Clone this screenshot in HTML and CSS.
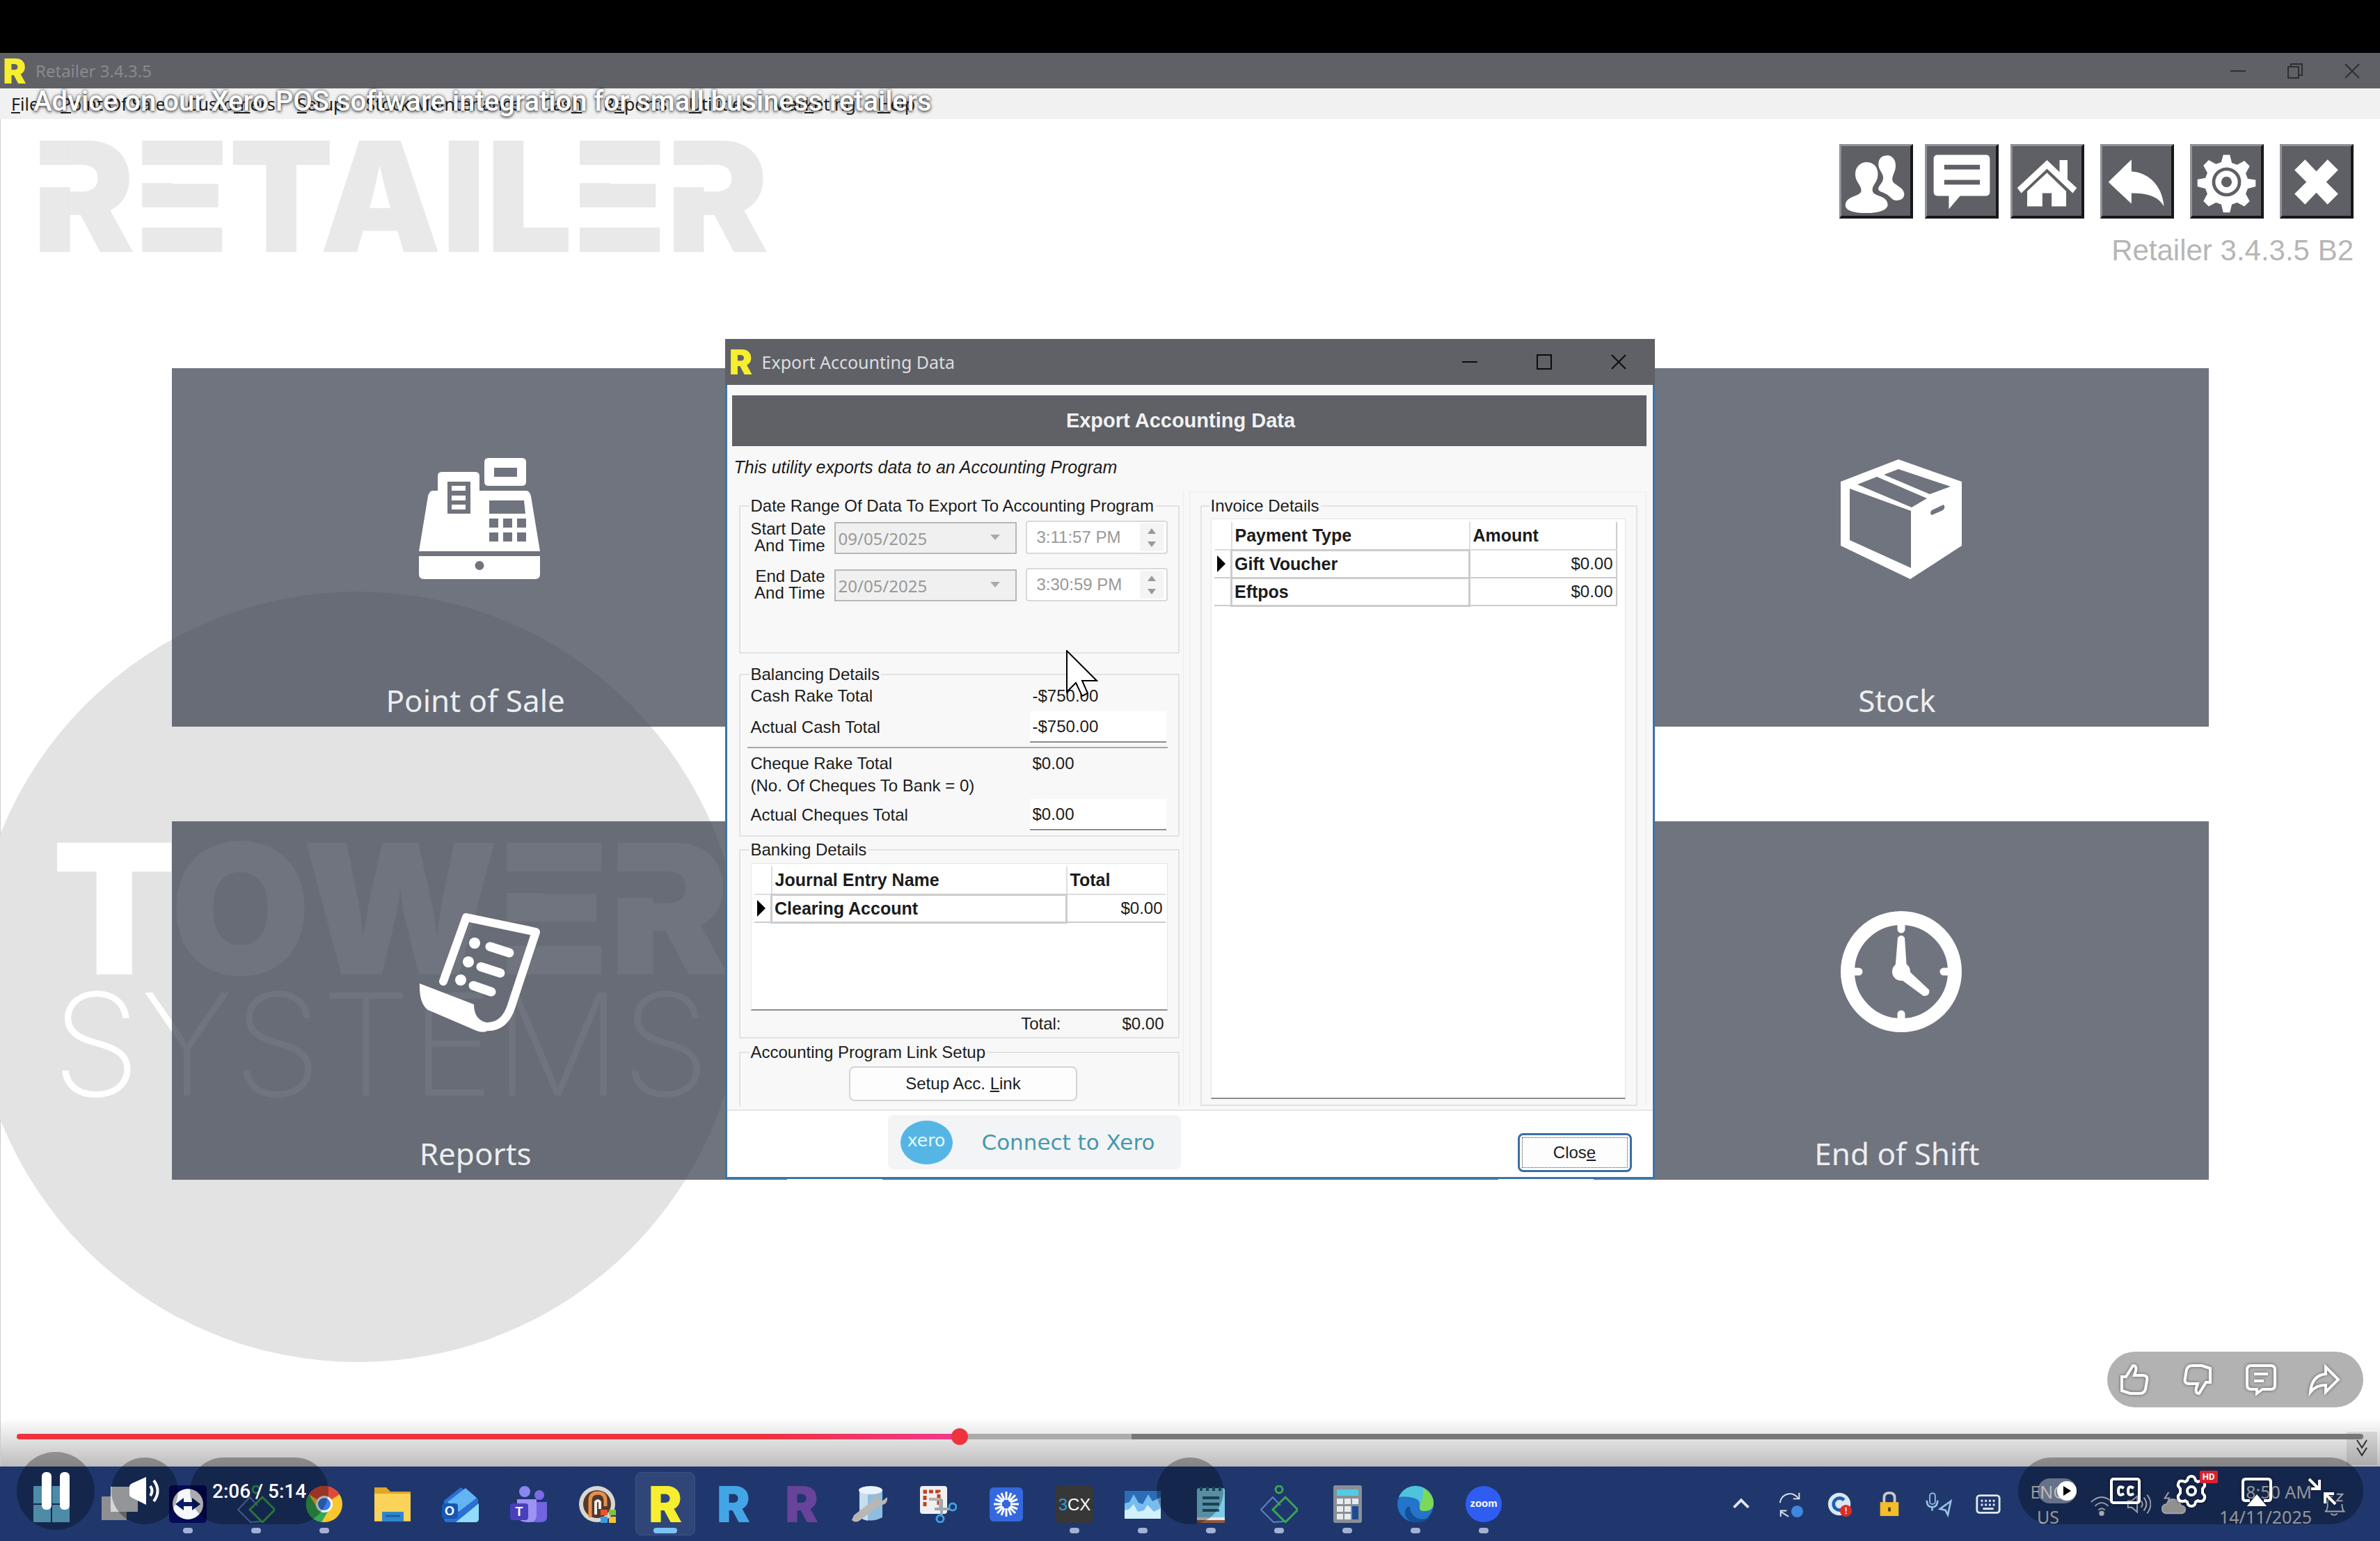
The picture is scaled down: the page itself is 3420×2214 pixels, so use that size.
FILE: index.html
```html
<!DOCTYPE html>
<html lang="en">
    <head>
        <meta charset="UTF-8">
        <meta name="viewport" content="width=device-width, initial-scale=1.0">
        <title>Retailer 3.4.3.5</title>
        <link rel="stylesheet" href="styles.css">
    </head>
    <body>
        <!-- Main window -->
        <div class="titlebar">
            <span class="r-logo">R</span>
            <span class="titlebar-text">Retailer 3.4.3.5</span>
            <div class="window-controls">
                <svg viewBox="0 0 24 24"><path d="M1 12h22"/></svg>
                <svg viewBox="0 0 24 24"><path d="M2 6h15v16H2zM6 6V2h16v16h-5"/></svg>
                <svg viewBox="0 0 24 24"><path d="M2 2l20 20M22 2L2 22"/></svg>
            </div>
        </div>
        <nav class="menu">
            <span><u>F</u>ile</span>
            <span><u>P</u>oint Of Sale</span>
            <span>Custo<u>m</u>ers</span>
            <span><u>S</u>etup</span>
            <span>Stock Maintenance</span>
            <span>Cas<u>h</u></span>
            <span>R<u>e</u>ports</span>
            <span><u>U</u>tilities</span>
            <span>Mar<u>k</u>eting</span>
            <span><u>H</u>elp</span>
        </nav>

        <main class="app">
            <div class="watermark">
                <div class="tower">TOW<span class="cut-e">E</span><span class="cut-r">R</span></div>
                <div class="systems">SYSTEMS</div>
            </div>

            <header class="header">
                <div class="brand"><span class="cut-r">R</span><span class="cut-e">E</span>TAIL<span class="cut-e">E</span><span class="cut-r">R</span></div>
                <div class="header-right">
                    <div class="toolbar">
                        <div class="toolbar-group">
                            <button class="tool" aria-label="Customers">
                                <svg viewBox="0 0 100 100"><path d="M66 11c8-1 14 6 14 15 0 10-5 14-5 21 0 9 17 10 18 22 0 6-4 10-12 10-7 0-9-7-16-10-6-4-12-3-11-9 1-5 8-8 7-17-1-7-7-10-7-19 0-8 5-13 12-13z"/><path d="M36 21c11 0 18 8 17 20-1 12-9 15-8 23 1 10 22 6 23 21 0 8-12 13-32 13S4 94 4 86c1-15 23-12 24-22 0-8-8-12-9-23-1-12 7-20 17-20z"/></svg>
                            </button>
                            <button class="tool" aria-label="Messages">
                                <svg viewBox="0 0 100 100"><path fill-rule="evenodd" d="M14 10h73q6 0 6 6v50q0 6-6 6H48L31 92V72H14q-6 0-6-6V16q0-6 6-6zM24 25v7h54v-7zM24 48v7h54v-7z"/></svg>
                            </button>
                            <button class="tool" aria-label="Home">
                                <svg viewBox="0 0 100 100"><path d="M50 18l19 18V18h12v29l14 13-6 8-39-37-39 37-6-8zM50 37l29 28v23H57V68H43v20H20V65z"/></svg>
                            </button>
                        </div>
                        <div class="toolbar-group">
                            <button class="tool" aria-label="Back">
                                <svg viewBox="0 0 100 100"><path d="M7 51L42 17v18c28 2 47 24 49 53C82 72 64 68 42 68v16z"/></svg>
                            </button>
                            <button class="tool" aria-label="Settings">
                                <svg viewBox="0 0 100 100"><path fill-rule="evenodd" d="M45 10h10l3 12 8 3 11-6 8 8-6 11 3 8 12 2v10l-12 3-3 8 6 11-8 8-11-6-8 3-3 12H45l-3-12-8-3-11 6-8-8 6-11-3-8-12-3V47l12-2 3-8-6-11 8-8 11 6 8-3zM50 29a22 22 0 100 44 22 22 0 000-44z"/><path fill-rule="evenodd" d="M50 34a17 17 0 100 34 17 17 0 000-34zM50 43a8 8 0 110 16 8 8 0 010-16z"/></svg>
                            </button>
                            <button class="tool" aria-label="Close">
                                <svg viewBox="0 0 100 100"><path d="M17 33L33 17l17 18 17-18 16 16-18 18 18 18-16 16-17-18-17 18-16-16 18-18z"/></svg>
                            </button>
                        </div>
                    </div>
                    <div class="version">Retailer 3.4.3.5 B2</div>
                </div>
            </header>

            <!-- Launch tiles -->
            <div class="tiles">
                <button class="tile">
                    <svg viewBox="0 0 174 174"><path fill-rule="evenodd" d="M100 0h48q6 0 6 6v28q0 6-6 6h-48q-6 0-6-6V6q0-6 6-6zM108 14v13h33V14z"/><path fill-rule="evenodd" d="M33 20h48q6 0 6 6v21h67q5 0 7 8l13 79H0l13-79q2-8 7-8h7V26q0-6 6-6zM41 34v46h33V34zM101 61v19h52l-2-19zM101 87v13h13V87zM121 87v13h13V87zM141 87v13h13V87zM101 107v13h13v-13zM121 107v13h13v-13zM141 107v13h13v-13z"/><path d="M47 40h20v7H47zM47 54h20v7H47zM47 67h20v7H47z"/><path fill-rule="evenodd" d="M0 141h174v26q0 7-7 7H7q-7 0-7-7zM87 148a6 6 0 100 13 6 6 0 000-13z"/></svg>
                    <span>Point of Sale</span>
                </button>
                <button class="tile"></button>
                <button class="tile">
                    <svg viewBox="0 0 174 174"><path fill-rule="evenodd" d="M83 2l91 32v92l-74 48L0 126V34zM83 16L62 24l66 28 30-11zM52 27L24 38l78 33 22-13zM13 44v74l88 40V76zM131 75l17-8q3 4-1 8l-16 7q-4-3 0-7z"/></svg>
                    <span>Stock</span>
                </button>
                <button class="tile">
                    <svg viewBox="0 0 174 174"><path d="M35 101L68 9l100 21-35 106q-10 32-38 30" fill="none" stroke="#fff" stroke-width="12" stroke-linecap="round" stroke-linejoin="round"/><path d="M1 104l78 30q0 22 18 26v13q-7 2-14-1L13 142Q0 133 1 104z"/><circle cx="80" cy="46" r="8"/><circle cx="71" cy="73" r="8"/><circle cx="60" cy="99" r="8"/><path d="M102 51l28 9M89 80l28 9M78 107l26 9" stroke="#fff" stroke-width="13" stroke-linecap="round"/></svg>
                    <span>Reports</span>
                </button>
                <button class="tile"></button>
                <button class="tile">
                    <svg viewBox="0 0 174 174"><circle cx="87" cy="87" r="77" fill="none" stroke="#fff" stroke-width="20"/><path d="M87 18v8M87 148v8M18 87h8M148 87h8" stroke="#fff" stroke-width="11" stroke-linecap="round"/><circle cx="87" cy="87" r="13"/><path d="M82 38q5-6 10 0l3 45 32 30q2 9-8 9L85 97l-7-10z"/></svg>
                    <span>End of Shift</span>
                </button>
            </div>

            <button class="scroll-down" aria-label="Scroll down">
                <svg viewBox="0 0 20 30"><path d="M3 3l7 11 7-11M3 14l7 11 7-11"/></svg>
            </button>

            <!-- Export dialog -->
            <section class="dialog">
                <div class="dialog-title">
                    <span class="r-logo">R</span>
                    <span>Export Accounting Data</span>
                    <div class="window-controls">
                        <svg viewBox="0 0 24 24"><path d="M1 12h22"/></svg>
                        <svg viewBox="0 0 24 24"><path d="M2 2h20v20H2z"/></svg>
                        <svg viewBox="0 0 24 24"><path d="M2 2l20 20M22 2L2 22"/></svg>
                    </div>
                </div>
                <div class="dialog-body">
                    <h1>Export Accounting Data</h1>
                    <p class="intro">This utility exports data to an Accounting Program</p>
                    <div class="columns">
                        <div class="column">
                            <fieldset class="dates">
                                <legend>Date Range Of Data To Export To Accounting Program</legend>
                                <div class="date-row">
                                    <label for="start-date">Start Date<br>And Time</label>
                                    <span class="select-wrap"><select id="start-date" disabled><option>09/05/2025</option></select></span>
                                    <span class="time-wrap"><input type="text" value="3:11:57 PM" aria-label="Start time" disabled><svg viewBox="0 0 34 40"><path d="M11 15l6-8 6 8zM11 26l6 8 6-8z"/></svg></span>
                                </div>
                                <div class="date-row">
                                    <label for="end-date">End Date<br>And Time</label>
                                    <span class="select-wrap"><select id="end-date" disabled><option>20/05/2025</option></select></span>
                                    <span class="time-wrap"><input type="text" value="3:30:59 PM" aria-label="End time" disabled><svg viewBox="0 0 34 40"><path d="M11 15l6-8 6 8zM11 26l6 8 6-8z"/></svg></span>
                                </div>
                            </fieldset>
                            <fieldset class="balancing">
                                <legend>Balancing Details</legend>
                                <div class="line"><span>Cash Rake Total</span><span class="value">-$750.00</span></div>
                                <div class="line entry"><label for="cash">Actual Cash Total</label><input id="cash" type="text" value="-$750.00"></div>
                                <hr>
                                <div class="line"><span>Cheque Rake Total</span><span class="value">$0.00</span></div>
                                <div class="line"><span>(No. Of Cheques To Bank = 0)</span></div>
                                <div class="line entry"><label for="cheques">Actual Cheques Total</label><input id="cheques" type="text" value="$0.00"></div>
                            </fieldset>
                            <fieldset class="banking">
                                <legend>Banking Details</legend>
                                <div class="grid">
                                    <table>
                                        <colgroup><col class="col-mark"><col><col class="col-total"></colgroup>
                                        <tr><th></th><th>Journal Entry Name</th><th>Total</th></tr>
                                        <tr><td class="mark"><i></i></td><td class="name">Clearing Account</td><td class="amount">$0.00</td></tr>
                                    </table>
                                </div>
                                <div class="sum"><span>Total:</span><span class="amount">$0.00</span></div>
                            </fieldset>
                            <fieldset class="link-setup">
                                <legend>Accounting Program Link Setup</legend>
                                <button class="btn">Setup Acc. <u>L</u>ink</button>
                            </fieldset>
                        </div>
                        <div class="column column-right">
                            <fieldset class="invoice">
                                <legend>Invoice Details</legend>
                                <div class="grid">
                                    <table>
                                        <colgroup><col class="col-mark"><col><col class="col-amount"></colgroup>
                                        <tr><th></th><th>Payment Type</th><th>Amount</th></tr>
                                        <tr><td class="mark"><i></i></td><td class="name">Gift Voucher</td><td class="amount">$0.00</td></tr>
                                        <tr><td class="mark"></td><td class="name">Eftpos</td><td class="amount">$0.00</td></tr>
                                    </table>
                                </div>
                            </fieldset>
                        </div>
                    </div>
                    <div class="dialog-footer">
                        <button class="xero"><span class="xero-logo">xero</span>Connect to Xero</button>
                        <button class="btn btn-close"><span>Clos<u>e</u></span></button>
                    </div>
                </div>
                <svg class="cursor" viewBox="0 0 46 68"><path d="M1 1v59l13-13 9 19 8-4-8-18h21z" fill="#fff" stroke="#000" stroke-width="2"/></svg>
            </section>
        </main>

        <!-- Windows taskbar -->
        <footer class="taskbar">
            <div class="task-icons">
                <div class="task"><svg viewBox="0 0 54 54"><path d="M1 1h25v25H1zM28 1h25v25H28zM1 28h25v25H1zM28 28h25v25H28z" fill="#6fc8ef"/></svg></div>
                <div class="task"><svg viewBox="0 0 54 54"><path d="M1 16h36v34H1z" fill="#8f8f92"/><path d="M14 2h39v36H14z" fill="#d4d6d8"/></svg></div>
                <div class="task on"><svg viewBox="0 0 54 54"><rect width="54" height="54" rx="5" fill="#050a56"/><circle cx="27" cy="27" r="22" fill="#f4f7fb"/><path d="M9 27l12-9v6h12v-6l12 9-12 9v-6H21v6z" fill="#0a1c66"/></svg></div>
                <div class="task on"><svg viewBox="0 0 54 54"><path d="M33 52L19 53 1 35l17-18 11 12" fill="none" stroke="#5b83bd" stroke-width="2"/><path d="M36 17l18 18-18 18-18-18z" fill="none" stroke="#3aa652" stroke-width="3"/><circle cx="27" cy="6" r="5" fill="none" stroke="#3aa652" stroke-width="3"/></svg></div>
                <div class="task on"><svg viewBox="0 0 54 54"><circle cx="27" cy="27" r="26" fill="#fbc62f"/><path d="M27 27L5 13a26 26 0 0144 0z" fill="#dd4b3a"/><path d="M5 13a26 26 0 0018 40l12-20-18 0z" fill="#35a853"/><circle cx="27" cy="27" r="12" fill="#fff"/><circle cx="27" cy="27" r="9" fill="#3b7ded"/></svg></div>
                <div class="task"><svg viewBox="0 0 54 54"><path d="M1 3h17l6 6h29v43H1z" fill="#e0a528"/><path d="M1 12h52v39H1z" fill="#fbd35b"/><path d="M12 38h31v14H12z" fill="#2f86cf"/><path d="M17 44h21" stroke="#1c5fa0" stroke-width="3"/></svg></div>
                <div class="task"><svg viewBox="0 0 54 54"><path d="M3 22L27 3l25 17v28q0 5-5 5H8q-5 0-5-5z" fill="#2b6fd3"/><path d="M8 24L34 4l16 14-26 20z" fill="#63b4f5"/><path d="M20 53l33-27v22q0 5-5 5z" fill="#8fdcfb"/><rect y="26" width="23" height="22" rx="4" fill="#1557b5"/><text x="11" y="43" class="glyph">O</text></svg></div>
                <div class="task"><svg viewBox="0 0 54 54"><circle cx="21" cy="9" r="8" fill="#8a86f0"/><circle cx="42" cy="14" r="7" fill="#7b6be6"/><path d="M30 24h23v22q0 7-9 7H30z" fill="#7263e0"/><path d="M10 20h28v24q0 9-12 9-16 0-16-12z" fill="#9c93f5"/><rect y="26" width="26" height="24" rx="4" fill="#4a3fbb"/><text x="13" y="44" class="glyph">T</text></svg></div>
                <div class="task"><svg viewBox="0 0 54 54"><circle cx="27" cy="27" r="26" fill="#d9d7d4"/><circle cx="27" cy="27" r="20" fill="#54392b"/><path d="M17 46V22q0-11 11-11t11 11v8" fill="none" stroke="#e6904b" stroke-width="5"/><path d="M25 42V24q3-4 6 0v10" fill="none" stroke="#f3ece6" stroke-width="4"/><path d="M32 35h10v8H32z" fill="#e5562c"/><path d="M44 35h10v8H44z" fill="#86bf3c"/><path d="M32 45h10v9H32z" fill="#3a9be0"/><path d="M44 45h10v9H44z" fill="#f5c32c"/></svg></div>
                <div class="task active"><span class="r-logo r-big">R</span></div>
                <div class="task"><span class="r-logo r-big r-blue">R</span></div>
                <div class="task"><span class="r-logo r-big r-purple">R</span></div>
                <div class="task"><svg viewBox="0 0 54 54"><path d="M12 6v40q16 9 33 0V6z" fill="#8fbde0"/><path d="M12 6v40q6 4 12 5V6z" fill="#c6def0"/><ellipse cx="28" cy="7" rx="17" ry="6" fill="#eaf3fa"/><path d="M4 43l28-22q1-8 8-8l-1 8 5 2 8-6q1 11-11 12L13 50q-6 5-12 0z" fill="#b9b7b4"/></svg></div>
                <div class="task"><svg viewBox="0 0 54 54"><rect x="1" y="1" width="39" height="40" rx="4" fill="#eef0f2"/><path d="M8 30V9h20v21" fill="none" stroke="#c0431f" stroke-width="5" stroke-dasharray="6 3"/><path d="M14 20h16v14" fill="none" stroke="#b5b0a8" stroke-width="4"/><path d="M32 20v22M22 34h22" stroke="#9fa7b0" stroke-width="4"/><circle cx="48" cy="31" r="5" fill="none" stroke="#3fa0e4" stroke-width="3"/><circle cx="30" cy="48" r="5" fill="none" stroke="#3fa0e4" stroke-width="3"/></svg></div>
                <div class="task"><svg viewBox="0 0 54 54"><rect x="3" y="3" width="48" height="49" rx="6" fill="#3568dc"/><path d="M27 9v12M27 33v12M9 27h12M33 27h12M14 14l9 9M31 31l9 9M14 40l9-9M31 23l9-9M20 11l4 10M30 33l4 10M11 20l10 4M33 30l10 4M11 34l10-4M33 24l10-4M20 43l4-10M30 21l4-10" stroke="#fff" stroke-width="3"/></svg></div>
                <div class="task on"><svg viewBox="0 0 54 54"><rect width="54" height="54" rx="5" fill="#373737"/><text x="27" y="36" class="glyph cx"><tspan fill="#2e9fd8">3</tspan>CX</text></svg></div>
                <div class="task on"><svg viewBox="0 0 54 54"><path d="M1 8h52v40H1z" fill="#2b6db8"/><path d="M1 26l7-2 6-11 7 12 6 2 8-14 6 10 12-6v31H1z" fill="#79bdf0"/><path d="M1 36l7-2 6-7 6 11 9-2 5-8 9 10 10-5v15H1z" fill="#d3f0fd"/></svg></div>
                <div class="task on"><svg viewBox="0 0 54 54"><rect x="7" y="4" width="40" height="50" rx="3" fill="#7ecbe8"/><path d="M7 46h40v4H7z" fill="#e7e7e7"/><path d="M7 50h40v2q0 2-3 2H10q-3 0-3-2z" fill="#93573a"/><path d="M15 18h24M15 27h24M15 36h24" stroke="#205f78" stroke-width="4"/><path d="M13 2v6M22 2v6M31 2v6M40 2v6" stroke="#205f78" stroke-width="4"/></svg></div>
                <div class="task on"><svg viewBox="0 0 54 54"><path d="M33 52L19 53 1 35l17-18 11 12" fill="none" stroke="#5b83bd" stroke-width="2"/><path d="M36 17l18 18-18 18-18-18z" fill="none" stroke="#3aa652" stroke-width="3"/><circle cx="27" cy="6" r="5" fill="none" stroke="#3aa652" stroke-width="3"/></svg></div>
                <div class="task on"><svg viewBox="0 0 54 54"><rect x="7" width="41" height="54" rx="3" fill="#8a8f96"/><path d="M12 6h31v9H12z" fill="#52cbe3"/><path d="M12 19h9v8h-9zM23 19h9v8h-9zM34 19h9v8h-9zM12 30h9v8h-9zM23 30h9v8h-9zM12 41h9v8h-9zM23 41h9v8h-9z" fill="#e8ebee"/><path d="M34 30h9v19h-9z" fill="#1c4b94"/></svg></div>
                <div class="task on"><svg viewBox="0 0 54 54"><circle cx="27" cy="27" r="26" fill="#2474c9"/><path d="M3 17A26 26 0 0153 24q1 13-14 13-7 0-6-7 2-9-9-12-11-3-21-1z" fill="#4fc3d9"/><path d="M38 4q15 8 15 22 0 11-14 11-7 0-6-7 6-12 5-26z" fill="#7bd957"/><path d="M19 30q0 14 13 18 10 2 17-4-7 10-22 9-13-1-15-12-1-9 7-11z" fill="#134f9c"/></svg></div>
                <div class="task on"><svg viewBox="0 0 54 54"><circle cx="27" cy="27" r="26" fill="#2f5df2"/><text x="27" y="31" class="glyph zoom">zoom</text></svg></div>
            </div>
            <div class="tray">
                <div class="tray-icon"><svg viewBox="0 0 40 40"><path d="M9 25l11-11 11 11" stroke-width="4"/></svg></div>
                <div class="tray-icon"><svg viewBox="0 0 40 40"><path d="M4 18a15 15 0 0128-6M33 3v9h-9M14 30H5v9M6 32l11 7"/><circle cx="30" cy="31" r="9" fill="#3f87dc" stroke="none"/></svg></div>
                <div class="tray-icon"><svg viewBox="0 0 40 40"><circle cx="19" cy="20" r="17" fill="#d9e8f5" stroke="none"/><path d="M26 14a9 9 0 100 12" stroke="#1f5fb0" stroke-width="5"/><circle cx="29" cy="30" r="9" fill="#dd2d22" stroke="none"/><path d="M29 25v6M29 33v2" stroke="#fff" stroke-width="2"/></svg></div>
                <div class="tray-icon"><svg viewBox="0 0 40 40"><path d="M12 19V10q0-7 8-7t8 7v9" stroke="#c9c9c9" stroke-width="4"/><path d="M6 17h28v21H6z" fill="#f6bd2a" stroke="none"/><path d="M20 25v6" stroke="#5d4300" stroke-width="4"/></svg></div>
                <div class="tray-icon"><svg viewBox="0 0 44 40"><rect x="7" y="2" width="9" height="18" rx="4" stroke="#9cc3e8"/><path d="M2 14q0 11 9 11t9-11M11 25v6M42 15L24 28l9 2 4 8z" stroke="#9cc3e8" stroke-width="3"/></svg></div>
                <div class="tray-icon"><svg viewBox="0 0 40 40"><rect x="3" y="7" width="34" height="26" rx="4" stroke-width="3"/><path d="M9 15h23M9 21h23" stroke-width="3" stroke-dasharray="3 3"/><path d="M12 27h16" stroke-width="3"/></svg></div>
                <div class="lang">ENG<br>US</div>
                <div class="tray-icon small"><svg viewBox="0 0 40 40"><path d="M4 17q16-15 32 0M10 23q10-10 20 0M15 29q5-5 10 0"/><circle cx="20" cy="34" r="3" fill="#fff"/></svg></div>
                <div class="tray-icon small"><svg viewBox="0 0 40 40"><path d="M5 15h6l8-7v24l-8-7H5zM25 15q4 5 0 10M29 10q8 10 0 20M34 6q11 14 0 28"/></svg></div>
                <div class="tray-icon small"><svg viewBox="0 0 40 40"><path d="M8 34q-6-1-6-7t7-7q3-9 12-7t9 9q7 1 7 6t-5 6z" fill="#cfcfcf"/><path d="M12 2L6 11h7l-3 8"/></svg></div>
                <div class="clock">8:50 AM<br>14/11/2025</div>
                <div class="tray-icon bell"><svg viewBox="0 0 40 40"><path d="M7 31q4-3 3-13 1-9 8-10M32 20q0 8 3 11H6M15 34q5 5 10 0M24 5h9l-9 10h9"/></svg></div>
            </div>
        </footer>

        <!-- Video player overlay -->
        <div class="player">
            <div class="player-title">Advice on our Xero POS software integration for small business retailers</div>
            <div class="player-actions">
                <button aria-label="Like"><svg viewBox="0 0 24 24"><path d="M3 10h3l5-8q3 0 2 4l-1 3h6q4 0 3 4l-1 6q-1 3-4 3H9l-6-2z"/></svg></button>
                <button aria-label="Dislike"><svg viewBox="0 0 24 24"><path d="M21 14h-3l-5 8q-3 0-2-4l1-3H6q-4 0-3-4l1-6q1-3 4-3h7l6 2z"/></svg></button>
                <button aria-label="Comments"><svg viewBox="0 0 24 24"><path d="M5 2h14q3 0 3 3v11q0 3-3 3h-6l-4 3v-3H5q-3 0-3-3V5q0-3 3-3zM7 8h10M7 13h7"/></svg></button>
                <button aria-label="Share"><svg viewBox="0 0 24 24"><path d="M13 3l9 9-9 9v-5q-7 0-11 5 1-12 11-13z"/></svg></button>
            </div>
            <input class="seek" type="range" min="0" max="314" value="126" aria-label="Seek">
            <div class="controls">
                <button class="round play" aria-label="Pause"><svg viewBox="0 0 56 56"><rect x="8" y="1" width="14" height="54" rx="6"/><rect x="34" y="1" width="14" height="54" rx="6"/></svg></button>
                <button class="round" aria-label="Mute"><svg viewBox="0 0 48 48"><path d="M2 18q0-3 4-5L26 4v40L6 34q-4-2-4-5z"/><path d="M32 17q5 7 0 14M37 9q11 15 0 30" fill="none" stroke="#fff" stroke-width="4"/></svg></button>
                <div class="pill time">2:06 / 5:14</div>
                <div class="pill settings">
                    <button class="autoplay" aria-label="Autoplay"><i></i></button>
                    <button aria-label="Captions"><svg viewBox="0 0 48 48"><rect x="4" y="7" width="40" height="34" rx="3"/><path d="M22 20q-8-5-8 4t8 4M36 20q-8-5-8 4t8 4"/></svg></button>
                    <button class="quality" aria-label="Quality"><svg viewBox="0 0 48 48"><path d="M24 3q5 0 6 6l3 2q5-2 8-1 3 4 2 7l-3 4v6l3 4q1 4-2 7-4 2-8 0l-3 2q-1 6-6 6t-6-6l-3-2q-4 2-8 0-3-3-2-7l3-4v-6l-3-4q-1-3 2-7 3-1 8 1l3-2q1-6 6-6z"/><circle cx="24" cy="24" r="6"/></svg><b>HD</b></button>
                    <button aria-label="AirPlay"><svg viewBox="0 0 48 48"><path d="M14 38H8q-4 0-4-4V11q0-4 4-4h32q4 0 4 4v23q0 4-4 4h-6"/><path d="M14 44l10-12 10 12z" fill="#fff"/></svg></button>
                    <button aria-label="Exit full screen"><svg viewBox="0 0 48 48"><path d="M5 7l14 14M8 21h12V8M43 43L29 29M28 42V28h13"/></svg></button>
                </div>
            </div>
            <span class="round next"></span>
        </div>
    </body>
</html>
```
FILE: styles.css
```css
* {
    box-sizing: border-box;
}

body {
    margin: 0;
    min-height: 100vh;
    display: flex;
    flex-direction: column;
    position: relative;
    overflow: hidden;
    background: #fff;
    border-top: 76px solid #000;
    font-family: "Liberation Sans", Arial, sans-serif;
    font-size: 24px;
    color: #1c1c1c;
}

button,
input,
select {
    font: inherit;
    color: inherit;
    margin: 0;
    padding: 0;
    border: 0;
    background: none;
}

svg {
    display: block;
}

/* Title bars */
.titlebar {
    display: flex;
    align-items: center;
    gap: 12px;
    height: 51px;
    padding: 0 28px 0 3px;
    background: #5f6166;
    color: #888b90;
    font-family: "Noto Sans", sans-serif;
    font-size: 24px;
    line-height: 48px;
}

.r-logo {
    width: 36px;
    font-family: Inter, sans-serif;
    font-weight: 900;
    font-size: 50px;
    line-height: 48px;
    text-align: center;
    color: #f6ee2f;
}

.window-controls {
    display: flex;
    gap: 58px;
    margin-left: auto;
}

.window-controls svg {
    width: 24px;
    height: 24px;
    fill: none;
    stroke: #2c2e31;
    stroke-width: 2;
}

.menu {
    display: flex;
    align-items: center;
    gap: 31px;
    height: 44px;
    padding-left: 16px;
    background: #f1f1f1;
    font-family: "Noto Sans", sans-serif;
    font-size: 25px;
    line-height: 40px;
    color: #222;
}

/* Application area */
.app {
    flex: 1;
    position: relative;
    border-left: 1px solid #ccc;
}

.app::after {
    content: "";
    position: absolute;
    left: 0;
    right: 0;
    bottom: 0;
    height: 70px;
    background: linear-gradient(rgba(0, 0, 0, 0), rgba(0, 0, 0, 0.26));
}

.watermark {
    position: absolute;
    left: -40px;
    top: 679px;
    width: 1107px;
    height: 1107px;
    padding: 336px 0 0 114px;
    border-radius: 50%;
    background: #e3e3e3;
    color: #fff;
    white-space: nowrap;
}

.tower {
    font-family: Inter, sans-serif;
    font-weight: 900;
    font-size: 260px;
    line-height: 240px;
}

.systems {
    font-family: Inter, sans-serif;
    font-weight: 200;
    font-size: 204px;
    line-height: 148px;
}

.header {
    position: relative;
    display: flex;
    justify-content: space-between;
    height: 358px;
    padding: 36px 38px 0 46px;
}

.brand {
    font-family: Inter, sans-serif;
    font-weight: 900;
    font-size: 220px;
    line-height: 150px;
    color: #e9e9e9;
}

/* Stencil cuts through the stems of E and R */
.cut-e,
.cut-r {
    color: transparent;
    --ink: #e9e9e9;
    -webkit-background-clip: text;
    background-clip: text;
}

.tower .cut-e,
.tower .cut-r {
    --ink: #fff;
}

.cut-e {
    background-image: linear-gradient(var(--ink) 33%, transparent 33% 43%, var(--ink) 43% 56%, transparent 56% 67%, var(--ink) 67%);
}

.cut-r {
    background-image: linear-gradient(var(--ink), var(--ink)), linear-gradient(var(--ink) 33%, transparent 33% 45%, var(--ink) 45%);
    background-size: 62% 100%, 38% 100%;
    background-position: right, left;
    background-repeat: no-repeat;
}

.header-right {
    text-align: right;
}

.toolbar,
.toolbar-group {
    display: flex;
    gap: 23px;
}

.toolbar-group:first-child {
    gap: 17px;
}

.tool {
    width: 106px;
    height: 107px;
    padding: 2px;
    background: #5f6065;
    border: 4px solid;
    border-color: #909196 #17171c #17171c #909196;
    border-width: 3px 4px 4px 3px;
}

.tool svg,
.tile svg {
    fill: #fff;
}

.version {
    margin-top: 22px;
    font-size: 42px;
    line-height: 48px;
    color: #b6b6b6;
}

/* Tiles */
.tiles {
    position: relative;
    display: grid;
    grid-template-columns: repeat(3, 1fr);
    grid-auto-rows: 515px;
    gap: 136px 137px;
    padding: 0 246px;
}

.tile {
    display: flex;
    flex-direction: column;
    align-items: center;
    justify-content: space-between;
    padding: 129px 0 8px;
    background: rgba(52, 59, 73, 0.71);
    color: #eceef0;
    font-family: "Noto Sans", "Open Sans", sans-serif;
    font-size: 44px;
    line-height: 60px;
}

.tile span {
    padding-right: 12px;
}

.tile svg {
    width: 174px;
    height: 174px;
}

.scroll-down {
    position: absolute;
    right: 4px;
    bottom: 2px;
    width: 44px;
    height: 48px;
    padding: 8px 12px;
    background: #e6e6e6;
}

.scroll-down svg {
    width: 20px;
    height: 30px;
    fill: none;
    stroke: #333;
    stroke-width: 2;
}

/* Dialog */
.dialog {
    position: absolute;
    z-index: 1;
    top: 316px;
    left: 50%;
    width: 1336px;
    margin-left: -669px;
}

.dialog-title {
    display: flex;
    align-items: center;
    gap: 12px;
    height: 66px;
    padding: 0 40px 0 5px;
    background: #5f6166;
    color: #dcdde0;
    font-family: "Noto Sans", sans-serif;
    font-size: 25px;
    line-height: 48px;
}

.dialog-title .window-controls {
    gap: 83px;
}

.dialog-title .window-controls svg {
    stroke: #0c0c0e;
    stroke-width: 2;
}

.dialog-body {
    padding-top: 15px;
    border: 3px solid #3b74ad;
    border-top: 0;
    background: #f8f8f8;
}

h1 {
    margin: 0 9px 0 7px;
    padding-right: 24px;
    background: #5f6166;
    color: #f2f2f2;
    font-size: 29px;
    line-height: 73px;
    text-align: center;
}

.intro {
    margin: 0 10px 5px;
    font-size: 25px;
    font-style: italic;
    line-height: 60px;
}

.columns {
    display: grid;
    grid-template-columns: 648px 1fr;
    gap: 8px;
    margin: 0 9px 0 8px;
}

.column {
    display: flex;
    flex-direction: column;
    padding: 9px 5px 0 9px;
    border-right: 1px solid #ececec;
}

.column-right {
    padding: 8px 12px 0 15px;
    border: 1px solid #ececec;
    border-bottom: 0;
}

fieldset {
    min-width: 0;
    margin: 0;
    padding: 0 15px;
    border: 2px solid #e3e3e3;
}

legend {
    margin-left: -2px;
    padding: 0 2px;
    line-height: 24px;
}

.dates {
    height: 224px;
    padding-top: 9px;
}

.date-row {
    display: flex;
    gap: 13px;
    height: 48px;
    margin-bottom: 20px;
}

.date-row label {
    width: 107px;
    line-height: 24px;
    text-align: right;
    white-space: nowrap;
}

.select-wrap {
    position: relative;
    flex: 1;
}

.select-wrap::after {
    content: "";
    position: absolute;
    right: 24px;
    top: 20px;
    border: 7px solid transparent;
    border-top: 8px solid #aaa;
    border-bottom: 0;
}

select {
    appearance: none;
    width: 100%;
    height: 46px;
    margin-top: 2px;
    padding-left: 4px;
    border: 2px solid #b8b8b8;
    background: #f0f0f0;
    color: #999;
    opacity: 1;
    font-family: "Noto Sans", sans-serif;
    font-size: 24px;
}

.time-wrap {
    display: flex;
    align-items: center;
    width: 204px;
    padding: 0 4px 0 14px;
    border: 2px solid #d9d9d9;
    border-radius: 4px;
    background: #fff;
}

.time-wrap input {
    flex: 1;
    min-width: 0;
    color: #999;
}

.time-wrap svg {
    width: 34px;
    height: 40px;
    background: #f4f4f4;
    fill: #999;
}

.balancing {
    height: 245px;
    margin-top: 18px;
}

.line {
    display: flex;
    justify-content: space-between;
    align-items: center;
    height: 32px;
}

legend + .line {
    height: 38px;
}

.value,
.line input {
    width: 196px;
    padding-left: 4px;
}

.value,
.entry input {
    margin-right: 2px;
}

.entry {
    height: 45px;
    margin-top: 3px;
}

.entry input {
    height: 45px;
    border-bottom: 2px solid #8d8d8d;
    background: #fff;
}

hr {
    margin: 6px 0 6px -5px;
    border: 0;
    border-top: 2px solid #a8a8a8;
}

.banking {
    height: 283px;
    margin-top: 7px;
    padding-top: 7px;
}

.grid {
    height: 212px;
    padding: 4px 2px 0 4px;
    border: 1px solid #e6e6e6;
    border-bottom: 2px solid #8d8d8d;
    background: #fff;
}

table {
    width: 100%;
    table-layout: fixed;
    border-collapse: collapse;
}

.col-mark {
    width: 25px;
}

.col-total {
    width: 142px;
}

.col-amount {
    width: 211px;
}

th,
td {
    height: 40px;
    padding: 0 4px;
    border-left: 2px solid #ddd;
    border-bottom: 2px solid #ccc;
    font-size: 25px;
    text-align: left;
}

th {
    border-bottom-color: #ddd;
}

th:first-child,
td:first-child {
    border-left: 0;
    padding: 0 0 0 4px;
}

td.name {
    padding: 0 3px;
    border: 3px solid #ccc;
    font-weight: bold;
}

.amount {
    font-size: 24px;
    text-align: right;
}

.mark i {
    display: block;
    width: 0;
    border: 12px solid transparent;
    border-left-color: #000;
    border-right: 0;
}

.sum {
    display: flex;
    justify-content: flex-end;
    line-height: 38px;
    padding-right: 5px;
}

.sum .amount {
    width: 148px;
}

.link-setup {
    height: 89px;
    margin-top: 8px;
    padding: 8px 0 0 12px;
    border-bottom: 0;
}

.link-setup legend {
    margin-left: 1px;
}

.btn {
    display: block;
    width: 328px;
    height: 50px;
    margin: 0 auto;
    border: 2px solid #d4d4d4;
    border-radius: 8px;
    background: #fdfdfd;
}

.invoice {
    flex: 1;
    padding: 6px 15px 8px 13px;
}

.invoice .grid {
    height: 834px;
    padding: 4px 11px 0 4px;
}

.invoice table {
    border-right: 2px solid #ccc;
}

.dialog-footer {
    display: flex;
    justify-content: space-between;
    height: 97px;
    margin-top: 5px;
    padding: 6px 30px 0 231px;
    border-top: 2px solid #e6e6e6;
    background: #fff;
}

.xero {
    display: flex;
    align-items: center;
    gap: 42px;
    width: 421px;
    height: 78px;
    padding-left: 18px;
    border-radius: 8px;
    background: #f3f4f5;
    color: #4798b0;
    font-family: "DejaVu Sans", sans-serif;
    font-size: 31px;
    white-space: nowrap;
}

.xero-logo {
    width: 75px;
    height: 63px;
    border-radius: 50%;
    background: #55b6e6;
    color: #e6f6ff;
    font-size: 25px;
    line-height: 58px;
}

.btn-close {
    width: 164px;
    height: 56px;
    margin: 26px 0 0;
    padding: 3px;
    border: 3px solid #3a6ea8;
}

.btn-close span {
    display: block;
    border: 1px dotted #444;
    line-height: 42px;
}

.cursor {
    position: absolute;
    left: 490px;
    top: 447px;
    width: 46px;
    height: 68px;
}

/* Taskbar */
.taskbar {
    display: flex;
    justify-content: space-between;
    height: 107px;
    padding-left: 25px;
    background: #1f376d;
}

.task-icons {
    display: flex;
}

.task {
    position: relative;
    display: flex;
    align-items: center;
    justify-content: center;
    width: 98px;
}

.task svg {
    width: 54px;
    height: 54px;
}

.glyph {
    fill: #fff;
    font-size: 18px;
    font-weight: bold;
    text-anchor: middle;
}

.glyph.cx {
    font-size: 24px;
    font-weight: normal;
}

.glyph.zoom {
    font-size: 15px;
}

.task.on::after,
.task.active::after {
    content: "";
    position: absolute;
    bottom: 11px;
    left: 42px;
    width: 14px;
    height: 8px;
    border-radius: 4px;
    background: #a3b1d4;
}

.task.active::after {
    left: 32px;
    width: 34px;
    background: #7cc3fa;
}

.task.active::before {
    content: "";
    position: absolute;
    inset: 8px 6px;
    border-radius: 8px;
    border: 1px solid #3b5387;
    background: rgba(255, 255, 255, 0.08);
}

.r-big {
    position: relative;
    width: 54px;
    font-size: 72px;
}

.r-blue {
    color: #43a5e6;
}

.r-purple {
    color: #68439a;
}

.tray {
    display: flex;
    align-items: center;
    padding-right: 34px;
    font-family: "Noto Sans", sans-serif;
    font-size: 25px;
    line-height: 36px;
    color: #d6d8dc;
}

.tray-icon {
    display: flex;
    justify-content: center;
    width: 71px;
}

.tray-icon.small {
    width: 52px;
}

.tray-icon.bell {
    width: 64px;
}

.tray-icon svg {
    width: 38px;
    height: 38px;
    fill: none;
    stroke: #e3e7ee;
    stroke-width: 2;
}

.lang {
    width: 102px;
    text-align: center;
}

.clock {
    width: 172px;
    text-align: right;
}

/* Player overlay */
.player {
    position: absolute;
    z-index: 2;
    inset: 0;
    display: flex;
    flex-direction: column;
    font-family: Roboto, sans-serif;
    color: #fff;
}

.player-title {
    padding: 46px 48px 0;
    font-size: 40px;
    line-height: 48px;
    font-weight: 500;
    text-shadow: 0 0 4px rgba(0, 0, 0, 0.7), 0 2px 4px rgba(0, 0, 0, 0.5);
}

.player-actions {
    display: flex;
    justify-content: space-between;
    align-items: center;
    align-self: flex-end;
    width: 368px;
    height: 80px;
    margin: auto 24px 26px 0;
    padding: 0 32px 0 15px;
    border-radius: 40px;
    background: rgba(0, 0, 0, 0.3);
}

.player-actions svg,
.settings svg {
    width: 48px;
    height: 48px;
    fill: none;
    stroke: #fff;
    stroke-width: 2;
    filter: drop-shadow(0 0 2px rgba(0, 0, 0, 0.5));
}

.seek {
    appearance: none;
    height: 32px;
    margin: 0 24px;
}

.seek::-webkit-slider-runnable-track {
    height: 8px;
    border-radius: 4px;
    background: linear-gradient(90deg, #ee333f 0 32%, #ee3a8d 40%, #ababab 40% 47.5%, #777 47.5%);
}

.seek::-webkit-slider-thumb {
    appearance: none;
    width: 24px;
    height: 24px;
    margin-top: -8px;
    border-radius: 50%;
    background: #ee333f;
}

.controls {
    display: flex;
    align-items: center;
    gap: 24px;
    height: 112px;
    margin: 6px 24px 16px;
}

.round {
    display: flex;
    align-items: center;
    justify-content: center;
    width: 96px;
    height: 96px;
    border-radius: 50%;
    background: rgba(0, 0, 0, 0.3);
    fill: #fff;
}

.round svg {
    width: 48px;
    height: 48px;
}

.play {
    width: 112px;
    height: 112px;
}

.play svg {
    width: 56px;
    height: 56px;
}

.next {
    position: absolute;
    left: 50%;
    bottom: 24px;
    margin-left: -48px;
}

.pill {
    display: flex;
    align-items: center;
    height: 96px;
    border-radius: 48px;
    background: rgba(0, 0, 0, 0.3);
}

.time {
    margin-left: -7px;
    padding: 0 32px;
    font-size: 28px;
    font-weight: 500;
}

.settings {
    justify-content: space-between;
    width: 496px;
    margin-left: auto;
    padding: 0 35px 0 28px;
}

.settings svg {
    stroke-width: 4;
}

.autoplay {
    display: flex;
    justify-content: flex-end;
    align-items: center;
    width: 56px;
    height: 36px;
    border-radius: 18px;
    background: rgba(255, 255, 255, 0.35);
}

.autoplay i {
    display: flex;
    align-items: center;
    justify-content: center;
    width: 28px;
    height: 28px;
    border-radius: 50%;
    background: #fff;
}

.autoplay i::after {
    content: "";
    border: 7px solid transparent;
    border-left: 11px solid #000;
    border-right: 0;
}

.quality {
    position: relative;
}

.quality b {
    position: absolute;
    top: -5px;
    right: -14px;
    padding: 0 4px;
    border-radius: 2px;
    background: #d8232f;
    font-size: 13px;
    line-height: 18px;
}
```
